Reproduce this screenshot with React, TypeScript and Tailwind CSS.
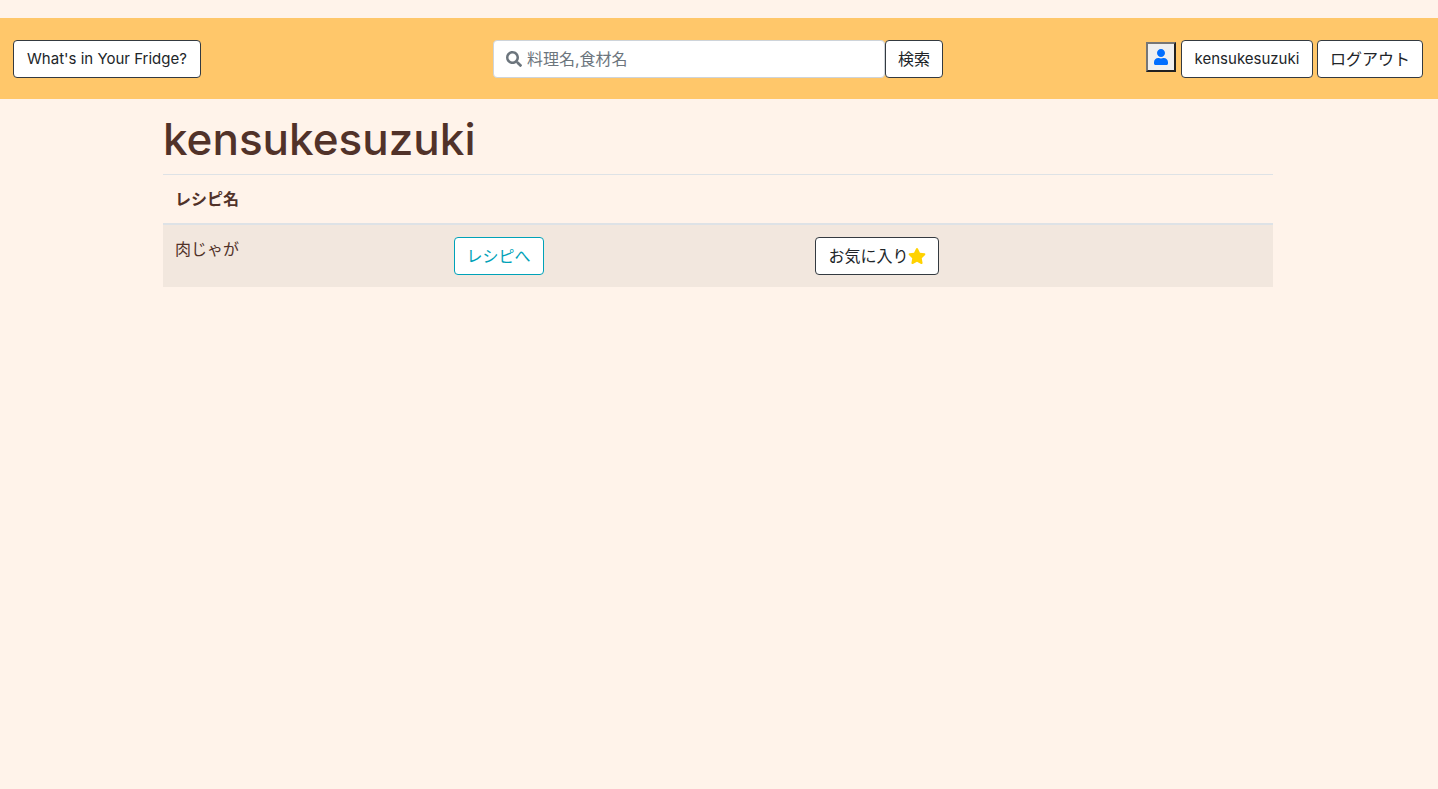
import React from "react";
import { FaSearch, FaStar, FaUser } from "react-icons/fa";

const button =
  "flex h-[38px] shrink-0 items-center justify-center whitespace-nowrap rounded border border-[#343a40] bg-white px-3 leading-6 text-[#212529]";

type Recipe = { id: number; name: string };

const recipes: Recipe[] = [{ id: 1, name: "肉じゃが" }];

function Header() {
  return (
    <header className="grid h-[81px] grid-cols-[1fr_minmax(0,450px)_1fr] items-center bg-[#ffc76a] pr-[15px] pl-[13px]">
      <div className="flex">
        <a href="#top" className={`${button} min-w-[188px] text-[15px]`}>
          What's in Your Fridge?
        </a>
      </div>
      <form className="flex" role="search" onSubmit={(e) => e.preventDefault()}>
        <div className="flex h-[38px] min-w-0 flex-1 items-center gap-[5px] rounded border border-[#ced4da] bg-white px-3 text-[#6c757d]">
          <label htmlFor="keyword" aria-label="検索キーワード">
            <FaSearch className="size-4" />
          </label>
          <input
            id="keyword"
            type="text"
            placeholder="料理名,食材名"
            className="min-w-0 flex-1 bg-transparent text-base leading-6 text-[#495057] outline-none placeholder:text-[#6c757d]"
          />
        </div>
        <button type="submit" className={`${button} text-base`}>
          検索
        </button>
      </form>
      <div className="flex justify-end gap-1">
        <button
          type="button"
          aria-label="マイページ"
          className="mt-0.5 mr-px flex size-[30px] items-center justify-center border-2 border-t-[#767676] border-r-[#212121] border-b-[#212121] border-l-[#767676] bg-[#efefef] text-[#006eff]"
        >
          <FaUser className="h-4 w-[14px]" />
        </button>
        <a href="#user" className={`${button} min-w-[132px] text-[15px]`}>
          kensukesuzuki
        </a>
        <a href="#logout" className={`${button} text-base`}>
          ログアウト
        </a>
      </div>
    </header>
  );
}

export default function App() {
  return (
    <div className="min-h-screen bg-[#fff3ea] pt-[18px] font-['Inter','Noto_Sans_CJK_JP',sans-serif] text-base leading-6 text-[#513229]">
      <Header />
      <main className="pt-[10px] pr-[15px] pl-[13px]">
        <div className="mx-auto max-w-[1110px]">
          <h1 className="mb-1 text-[44px] leading-[61px] font-medium">kensukesuzuki</h1>
          <table className="w-full table-fixed border-separate border-spacing-0 text-left">
            <colgroup>
              <col className="w-[25.1%]" />
              <col className="w-[32.6%]" />
              <col />
            </colgroup>
            <thead>
              <tr>
                <th scope="col" className="border-t border-b-2 border-[#dee2e6] p-3 font-bold">
                  レシピ名
                </th>
                <td className="border-t border-b-2 border-[#dee2e6]" />
                <td className="border-t border-b-2 border-[#dee2e6]" />
              </tr>
            </thead>
            <tbody>
              {recipes.map((recipe) => (
                <tr key={recipe.id} className="bg-[#f2e7de] align-top">
                  <td className="p-3">{recipe.name}</td>
                  <td className="p-3">
                    <div className="flex">
                      <a
                        href="#recipe"
                        className="flex h-[38px] items-center rounded border border-[#00a2b8] bg-white px-3 whitespace-nowrap text-[#00a2b8]"
                      >
                        レシピへ
                      </a>
                    </div>
                  </td>
                  <td className="p-3">
                    <button type="button" className={`${button} text-base`}>
                      お気に入り
                      <FaStar className="h-4 w-[18px] text-[#ffd200]" />
                    </button>
                  </td>
                </tr>
              ))}
            </tbody>
          </table>
        </div>
      </main>
    </div>
  );
}
